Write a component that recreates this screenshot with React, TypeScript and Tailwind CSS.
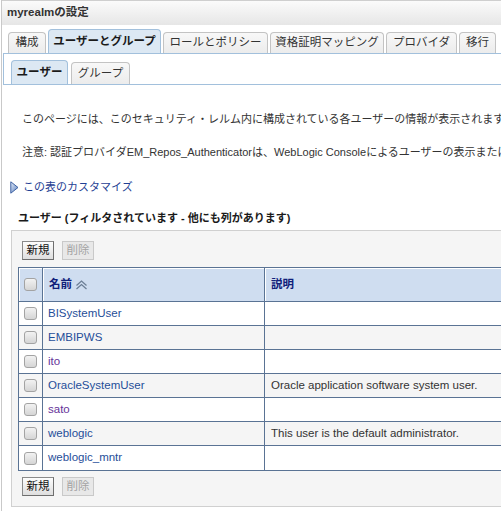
const users = [
  { name: "BISystemUser", desc: "", visited: false },
  { name: "EMBIPWS", desc: "", visited: false },
  { name: "ito", desc: "", visited: true },
  { name: "OracleSystemUser", desc: "Oracle application software system user.", visited: false },
  { name: "sato", desc: "", visited: true },
  { name: "weblogic", desc: "This user is the default administrator.", visited: false },
  { name: "weblogic_mntr", desc: "", visited: false },
]

const tabs = [
  { label: "構成", w: "w-[38px]" },
  { label: "ユーザーとグループ", w: "w-[113px]", active: true },
  { label: "ロールとポリシー", w: "w-[105px]" },
  { label: "資格証明マッピング", w: "w-[114px]" },
  { label: "プロバイダ", w: "w-[71px]" },
  { label: "移行", w: "w-[37px]" },
]

function Checkbox() {
  return (
    <div className="w-[13px] h-[13px] rounded-[3px] border border-[#a3a3a3] bg-gradient-to-b from-[#f2f2f2] to-[#d5d5d5]" />
  )
}

function Buttons() {
  return (
    <div className="flex gap-[8px] pl-[10px]">
      <button className="w-[32px] h-[19px] border border-[#8a8a8a] border-b-[#6e6e6e] border-r-[#6e6e6e] bg-gradient-to-b from-[#fdfdfd] to-[#dedede] text-[11.5px] leading-none text-[#111]">
        新規
      </button>
      <button className="w-[32px] h-[19px] border border-[#c9c9c9] bg-[#e8e8e8] text-[11.5px] leading-none text-[#a3a3a3]">
        削除
      </button>
    </div>
  )
}

function SortIcon() {
  return (
    <svg width="13" height="10" viewBox="0 0 13 10" className="ml-[3px]">
      <path d="M1.5 5.5 L6.5 1 L11.5 5.5" fill="none" stroke="#6d7f96" strokeWidth="1.3" />
      <path d="M1.5 9 L6.5 4.5 L11.5 9" fill="none" stroke="#6d7f96" strokeWidth="1.3" />
    </svg>
  )
}

export default function App() {
  return (
    <div className="w-[501px] h-[511px] overflow-hidden bg-white font-['Liberation_Sans','Noto_Sans_CJK_JP',sans-serif] text-[11.5px] text-[#333]">
      <div className="ml-[1px] h-full border-l border-[#c9c9c9]">
        {/* Title bar */}
        <div className="h-[25px] border-t border-[#cfcfcf] bg-gradient-to-b from-[#fbfbfb] to-[#e6e6e6] pl-[5px] flex items-center">
          <span className="text-[11.5px] font-bold text-[#333]">myrealmの設定</span>
        </div>

        {/* Main tabs */}
        <div className="ml-[1px] pt-[4px] pl-[5px] flex items-end gap-[2px] border-b border-[#a2c0dc]">
          {tabs.map((t) =>
            t.active ? (
              <div
                key={t.label}
                className={`${t.w} h-[24px] rounded-t-[4px] border border-b-0 border-[#a2c0dc] bg-[#dce8f3] flex items-center justify-center text-[11.5px] font-bold text-[#1a1a1a]`}
              >
                {t.label}
              </div>
            ) : (
              <div
                key={t.label}
                className={`${t.w} h-[21px] rounded-t-[4px] border border-b-0 border-[#c3c3c3] bg-gradient-to-b from-[#f8f8f8] to-[#ececec] flex items-center justify-center text-[11.5px] text-[#333]`}
              >
                {t.label}
              </div>
            )
          )}
        </div>

        {/* Sub tabs */}
        <div className="ml-[1px] h-[31px] border-l border-b border-[#a2c0dc] pl-[7px] flex items-end gap-[3px]">
          <div className="w-[57px] h-[24px] rounded-t-[4px] border border-b-0 border-[#a2c0dc] bg-[#dce8f3] flex items-center justify-center text-[11.5px] font-bold text-[#1a1a1a]">
            ユーザー
          </div>
          <div className="w-[59px] h-[22px] rounded-t-[4px] border border-b-0 border-[#c3c3c3] bg-gradient-to-b from-[#f8f8f8] to-[#ececec] flex items-center justify-center text-[11.5px] text-[#333]">
            グループ
          </div>
        </div>

        {/* Description */}
        <p className="mt-[26px] pl-[20px] text-[11px] leading-[16px] whitespace-nowrap">
          このページには、このセキュリティ・レルム内に構成されている各ユーザーの情報が表示されます。
        </p>
        <p className="mt-[17px] pl-[20px] text-[11px] leading-[16px] whitespace-nowrap">
          注意: 認証プロバイダEM_Repos_Authenticatorは、WebLogic Consoleによるユーザーの表示または変更をサポートしていません。
        </p>

        {/* Customize link */}
        <div className="mt-[19px] pl-[8px] flex items-center gap-[4px] text-[11px] leading-[16px]">
          <svg width="9" height="13" viewBox="0 0 9 13">
            <defs>
              <linearGradient id="tri" x1="0" y1="0" x2="1" y2="1">
                <stop offset="0" stopColor="#e4ecf8" />
                <stop offset="1" stopColor="#5a7fbf" />
              </linearGradient>
            </defs>
            <polygon points="0.8,0.8 8,6.5 0.8,12.2" fill="url(#tri)" stroke="#3e62a3" strokeWidth="1" />
          </svg>
          <span className="text-[#1f3f94]">この表のカスタマイズ</span>
        </div>

        {/* Section title */}
        <div className="mt-[15px] pl-[16px] text-[11px] leading-[16px] font-bold text-[#1a1a1a] whitespace-nowrap">
          ユーザー (フィルタされています - 他にも列があります)
        </div>

        {/* Table box */}
        <div className="mt-[4px] ml-[9px] w-[560px] border border-[#d0d0d0] bg-[#f5f5f5] pt-[10px] pb-[10px]">
          <Buttons />

          <div className="mt-[7px] ml-[6px] w-[560px] border border-[#5a7394]">
            <div className="flex h-[34px] border-b border-[#5a7394] bg-[#cfddf0]">
              <div className="w-[24px] border-r border-[#5a7394] shadow-[inset_1px_1px_0_#fff] flex items-center justify-center">
                <Checkbox />
              </div>
              <div className="w-[222px] border-r border-[#5a7394] shadow-[inset_1px_1px_0_#fff] flex items-center pl-[6px] font-bold text-[#10207a]">
                名前
                <SortIcon />
              </div>
              <div className="flex-1 shadow-[inset_1px_1px_0_#fff] flex items-center pl-[6px] font-bold text-[#10207a]">
                説明
              </div>
            </div>

            {users.map((u, i) => (
              <div
                key={u.name}
                className={`flex h-[24px] ${i < users.length - 1 ? "border-b border-[#5a7394]" : ""} ${i % 2 === 1 ? "bg-[#f5f5f5]" : "bg-white"}`}
              >
                <div className="w-[24px] border-r border-[#5a7394] flex items-center justify-center">
                  <Checkbox />
                </div>
                <div
                  className={`w-[222px] border-r border-[#5a7394] flex items-center pl-[5px] ${u.visited ? "text-[#663399]" : "text-[#1f4e99]"}`}
                >
                  {u.name}
                </div>
                <div className="flex-1 flex items-center pl-[6px] text-[#333] whitespace-nowrap">
                  {u.desc}
                </div>
              </div>
            ))}
          </div>

          <div className="mt-[6px]">
            <Buttons />
          </div>
        </div>
      </div>
    </div>
  )
}
